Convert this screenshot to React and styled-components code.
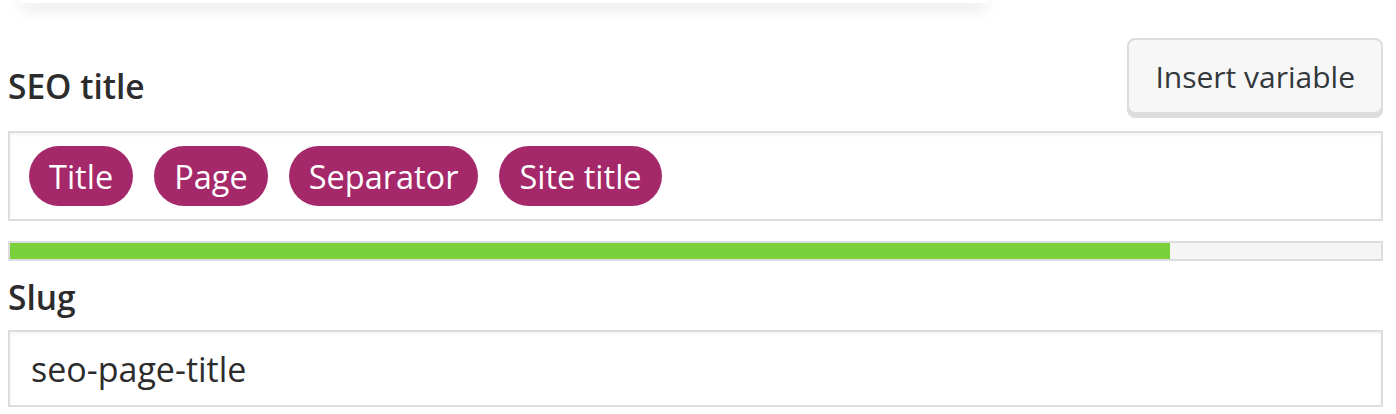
import React from 'react';
import styled, { createGlobalStyle } from 'styled-components';

const GlobalStyle = createGlobalStyle`
    body {
        margin: 0;
        background: #ffffff;
        font-family: "Open Sans", "Noto Sans", sans-serif;
        color: #2c2c2c;
    }
`;

const variables = ['Title', 'Page', 'Separator', 'Site title'];
const titleScore = 84.6;

const App = () => {
    return (
        <>
            <GlobalStyle />
            <Page>
                <TopCard />
                <Header>
                    <Label>SEO title</Label>
                    <InsertButton type="button">Insert variable</InsertButton>
                </Header>
                <TitleInput>
                    {variables.map((name) => (
                        <Pill key={name}>{name}</Pill>
                    ))}
                </TitleInput>
                <Progress>
                    <ProgressFill style={{ width: `${titleScore}%` }} />
                </Progress>
                <SlugLabel>Slug</SlugLabel>
                <SlugInput>seo-page-title</SlugInput>
            </Page>
        </>
    );
};

const Page = styled.div`
    display: flex;
    flex-direction: column;
    padding: 0 13px 0 8px;
    overflow: hidden;
`;

const TopCard = styled.div`
    height: 3px;
    margin: 0 396px 0 12px;
    background: #fff;
    border-radius: 0 0 18px 18px;
    box-shadow: 0 4px 14px rgba(0, 0, 0, 0.28);
`;

const Header = styled.div`
    display: flex;
    justify-content: space-between;
    align-items: flex-end;
    margin-top: 35px;
`;

const Label = styled.label`
    font-size: 33.5px;
    font-weight: 600;
    line-height: 40px;
    color: #2c2c2c;
    margin-bottom: 8px;
`;

const SlugLabel = styled(Label)`
    margin: 16px 0 0;
`;

const InsertButton = styled.button`
    height: 76px;
    padding: 0 26px;
    background: #f7f7f7;
    border: 2px solid #dddddd;
    border-radius: 8px;
    box-shadow: 0 4px 0 #dddddd;
    font-family: inherit;
    font-size: 30px;
    color: #32373c;
`;

const TitleInput = styled.div`
    display: flex;
    align-items: center;
    gap: 21px;
    height: 90px;
    box-sizing: border-box;
    margin-top: 17px;
    padding: 0 19px;
    border: 2px solid #dddddd;
    box-shadow: inset 0 2px 4px rgba(0, 0, 0, 0.05);
    background: #fff;
`;

const Pill = styled.span`
    display: inline-flex;
    align-items: center;
    height: 60px;
    padding: 0 20px;
    border-radius: 30px;
    background: #a4286a;
    color: #ffffff;
    font-size: 32.5px;
`;

const Progress = styled.div`
    display: flex;
    height: 20px;
    box-sizing: border-box;
    margin-top: 20px;
    border: 2px solid #dddddd;
    background: #f5f5f5;
`;

const ProgressFill = styled.div`
    background: #7ad03a;
`;

const SlugInput = styled.div`
    display: flex;
    align-items: center;
    height: 77px;
    box-sizing: border-box;
    margin-top: 13px;
    padding: 0 21px;
    border: 2px solid #dddddd;
    box-shadow: inset 0 2px 4px rgba(0, 0, 0, 0.05);
    font-size: 34px;
    color: #2c2c2c;
`;

export default App;
